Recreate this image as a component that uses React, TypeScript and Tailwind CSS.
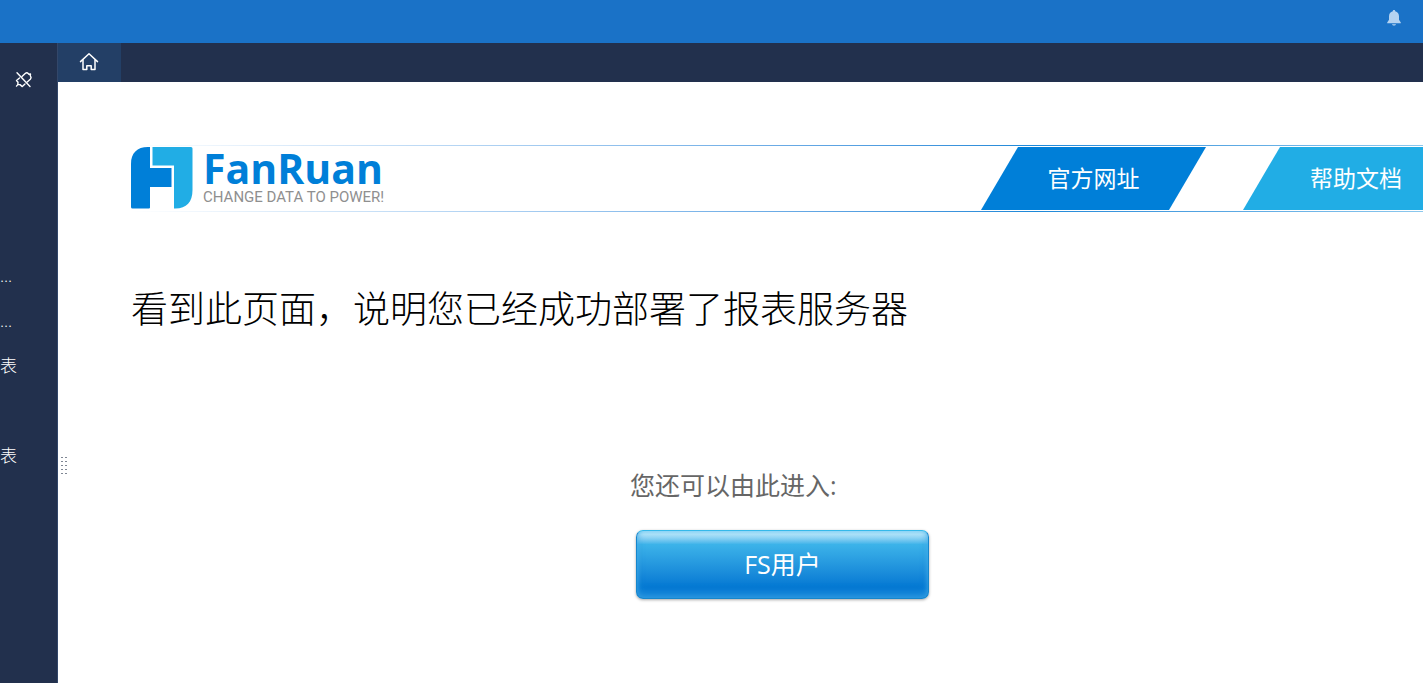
const sideItems = [
  { id: 'a', label: '...' },
  { id: 'b', label: '...' },
  { id: 'c', label: '表' },
  { id: 'd', label: '' },
  { id: 'e', label: '表' },
];

const gripRows = [0, 1, 2, 3, 4];

function BellIcon() {
  return (
    <svg width="16" height="18" viewBox="0 0 16 18" fill="#b5d3f1">
      <path d="M8 1c.8 0 1.2.5 1.2 1.2C11.6 2.8 13 4.700 13 7.200v3.600l1.800 2.600v.8H1.200v-.8L3 10.800V7.200c0-2.500 1.400-4.400 3.800-5C6.800 1.500 7.200 1 8 1Z" />
      <path d="M6 15.200h4c-.2.9-1 1.400-2 1.400s-1.800-.5-2-1.400Z" />
    </svg>
  );
}

function HomeIcon() {
  return (
    <svg width="20" height="20" viewBox="0 0 20 20" fill="none" stroke="#fff" strokeWidth="1.500" strokeLinejoin="round" strokeLinecap="round">
      <path d="M1.500 9.600 10 1.700l8.500 7.900" />
      <path d="M4 8v9.500h3.800v-3.800h4.400v3.800H16V8" />
    </svg>
  );
}

function UnpinIcon() {
  return (
    <svg width="18" height="18" viewBox="0 0 18 18" fill="none" stroke="#fff" strokeWidth="1.400" strokeLinejoin="round" strokeLinecap="round">
      <path d="M2 1.800 15 15.500" />
      <path d="M7 5.500 10.200 2.500c1-.8 2.200-.8 3 0l.7.7 1.600-.2-.3 1.600.4.600c.8 1 .6 2-.3 3L12.200 11" />
      <path d="M4.500 7 1.500 9.500l1.500 1.800-.2 2.300-1.300 1.500M2.800 13.600l2.200 0 2.300 2 2.700-2.500" />
    </svg>
  );
}

function LogoMark() {
  return (
    <svg width="62" height="64" viewBox="0 0 62 64">
      <path d="M17 1h2v21h21.500v19H19v20.500q0 1-1 1H1.500Q0 62.500 0 61V18C0 7 6 1 17 1Z" fill="#007fd8" />
      <path d="M21.500 1H60q1.500 0 1.500 1.500V44c0 12-6 18.500-17 18.500h-1.500V19.500H21.500Z" fill="#21ade5" />
    </svg>
  );
}

function Logo() {
  return (
    <div className="flex h-[65px] gap-[10px]">
      <LogoMark />
      <div className="whitespace-nowrap">
        <div className="font-['Open_Sans',sans-serif] text-[41px] leading-[44px] font-bold text-[#007fd8]">FanRuan</div>
        <div className="font-['Roboto',sans-serif] text-[15px] leading-[14px] text-[#8f8f8f]">CHANGE DATA TO POWER!</div>
      </div>
    </div>
  );
}

export default function App() {
  return (
    <div className="flex min-h-screen flex-col overflow-hidden bg-white font-['Open_Sans','Noto_Sans_CJK_SC',sans-serif]">
      <header className="flex h-[43px] items-start justify-end bg-[#1a72c7] px-[21px] py-[9px]">
        <button type="button" aria-label="notifications">
          <BellIcon />
        </button>
      </header>

      <div className="flex grow">
        <aside className="w-[58px] shrink-0 border-r border-[#33476a] bg-[#22304d] text-white">
          <div className="flex h-[210px] items-start px-[15px] pt-7">
            <button type="button" aria-label="unpin">
              <UnpinIcon />
            </button>
          </div>
          <ul>
            {sideItems.map((item) => (
              <li key={item.id} className="flex h-[45px] items-center text-[17px] font-light">
                {item.label}
              </li>
            ))}
          </ul>
        </aside>

        <div className="flex min-w-0 grow flex-col">
          <div className="flex h-[39px] bg-[#22304d]">
            <button type="button" aria-label="home" className="flex w-[63px] items-center justify-center bg-[#233f66] pr-[2px] pb-[2px]">
              <HomeIcon />
            </button>
          </div>

          <div className="flex grow">
            <div className="flex w-[10px] shrink-0 flex-col gap-[3px] px-[3px] pt-[375px]">
              {gripRows.map((row) => (
                <div key={row} className="flex gap-[2px]">
                  <span className="h-[1px] w-[2px] shrink-0 bg-[#7f8794]" />
                  <span className="h-[1px] w-[2px] shrink-0 bg-[#7f8794]" />
                </div>
              ))}
            </div>

            <main className="min-w-0 grow pt-[63px] pl-[63px]">
              <div className="h-px bg-linear-to-r from-white via-[#1b88d8] via-70% to-[#8cc8ed]" />
              <div className="flex h-[65px] items-center justify-between">
                <Logo />
                <nav className="flex gap-[37px] text-[23px] text-white">
                  <a href="#site" className="flex h-[63px] w-[225px] items-center justify-center bg-[#007fd8] [clip-path:polygon(37px_0,100%_0,188px_100%,0_100%)]">
                    官方网址
                  </a>
                  <a href="#docs" className="flex h-[63px] w-[180px] items-center bg-[#21ade5] pl-[67px] [clip-path:polygon(37px_0,100%_0,100%_100%,0_100%)]">
                    帮助文档
                  </a>
                </nav>
              </div>
              <div className="h-px bg-linear-to-r from-white via-[#1b88d8] via-70% to-[#8cc8ed]" />

              <h1 className="mt-[69px] text-[37px] leading-[56px] font-light whitespace-nowrap text-black">
                看到此页面，说明您已经成功部署了报表服务器
              </h1>

              <section className="ml-[499px] pt-[129px] pb-[80px]">
                <p className="text-[25px] leading-[38px] text-[#666]">您还可以由此进入:</p>
                <button
                  type="button"
                  className="mt-[26px] ml-[6px] h-[69px] w-[293px] rounded-[7px] border border-[#1686cc] border-t-[#35b9ea] bg-linear-to-b from-[#b0e3f9] from-5% via-[#3cb3e9] via-20% to-[#0277d2] to-85% text-[25px] text-white shadow-[0_1px_3px_rgba(0,0,0,0.35),inset_0_-6px_7px_rgba(50,155,225,0.6),inset_0_0_5px_rgba(80,190,240,0.7)]"
                >
                  FS用户
                </button>
              </section>
            </main>
          </div>
        </div>
      </div>
    </div>
  );
}
